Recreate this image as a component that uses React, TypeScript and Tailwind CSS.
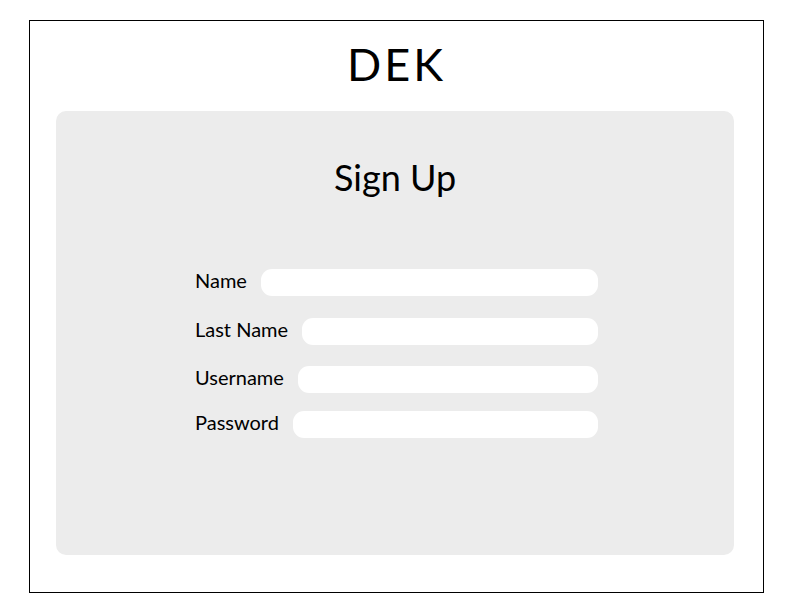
import React from "react";

const font = { fontFamily: "Lato, 'Noto Sans', sans-serif" };

function Row({ label, className = "" }: { label: string; className?: string }) {
  return (
    <div className={"flex items-center h-[27px] gap-[14px] " + className}>
      <span className="text-[20px] leading-none text-black whitespace-nowrap mb-[6px]">{label}</span>
      <div className="flex-1 h-[27px] rounded-[11px] bg-white" />
    </div>
  );
}

export default function App() {
  return (
    <div className="w-[792px] h-[612px] bg-white" style={font}>
      <div className="absolute left-[29px] top-[20px] w-[735px] h-[573px] border border-black flex flex-col">
        <div className="h-[90px] flex justify-center pt-[21px]">
          <span className="text-[45px] leading-none tracking-[3px] text-black">DEK</span>
        </div>
        <div className="ml-[26px] w-[678px] h-[444px] rounded-[10px] bg-[#ececec] flex flex-col items-center">
          <div className="mt-[48px] text-[36px] leading-none text-black">Sign Up</div>
          <div className="mt-[74px] w-[403px] self-start ml-[139px] flex flex-col">
            <Row label="Name" />
            <Row label="Last Name" className="mt-[22px]" />
            <Row label="Username" className="mt-[21px]" />
            <Row label="Password" className="mt-[18px]" />
          </div>
        </div>
      </div>
    </div>
  );
}
